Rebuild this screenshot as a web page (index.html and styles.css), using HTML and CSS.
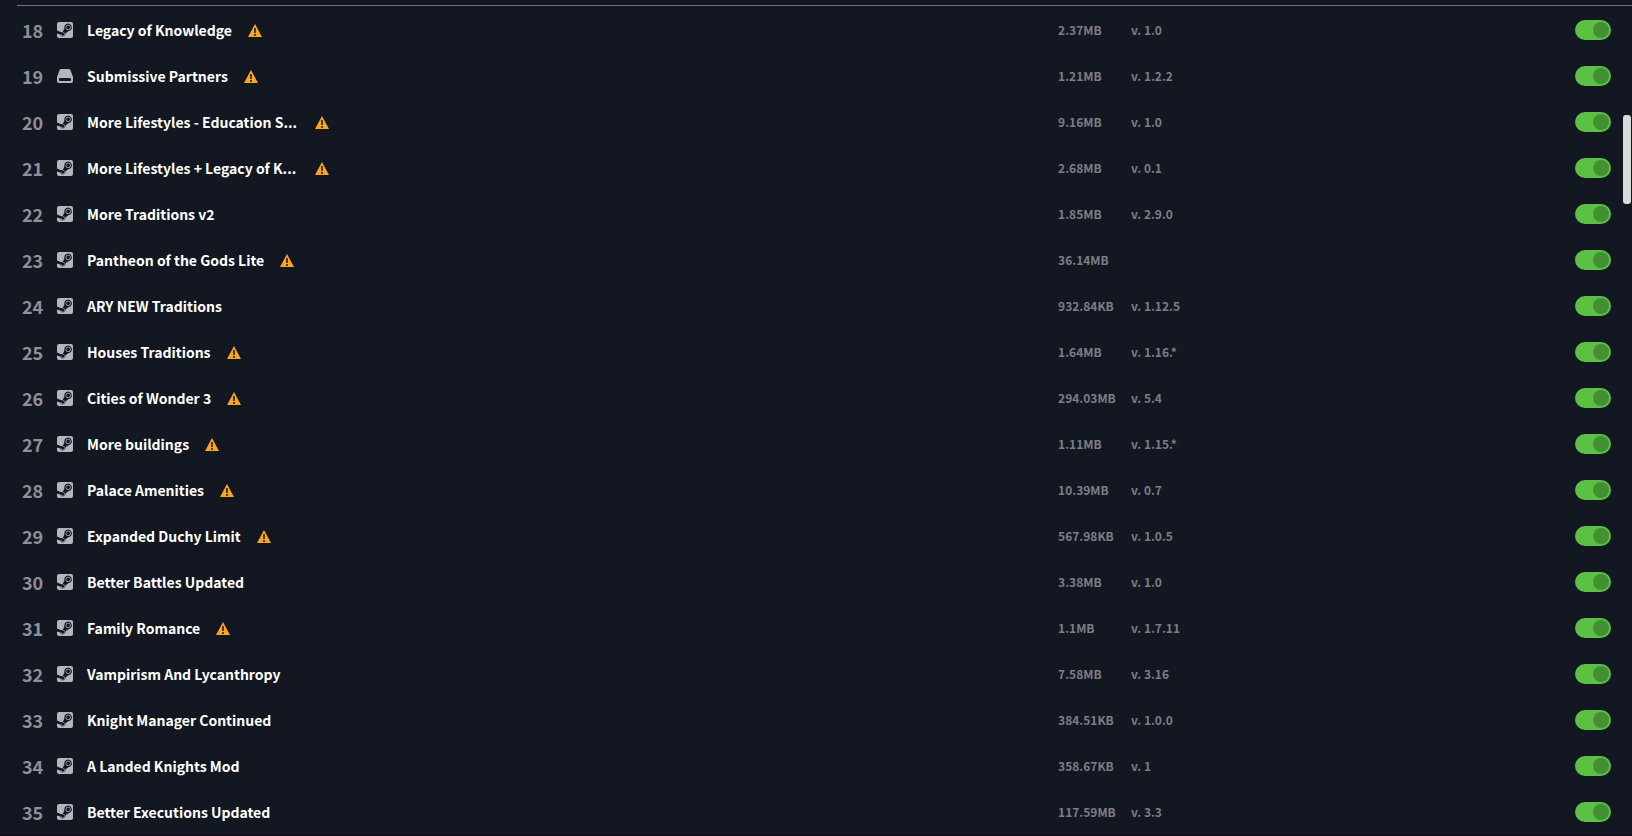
FILE: index.html
```html
<!DOCTYPE html>
<html lang="en">
<head>
<meta charset="utf-8">
<meta name="viewport" content="width=device-width, initial-scale=1">
<title>Mods</title>
<link rel="stylesheet" href="styles.css">
</head>
<body>
<svg class="sprite" aria-hidden="true">
  <symbol id="steam" viewBox="0 0 16 16">
    <rect width="16" height="16" rx="2" fill="#b4b6bd"/>
    <path d="M0 8.6 L4.2 10.3 Q5 9.7 5.9 9.8 L7.4 6.4 A3.8 3.8 0 1 1 11.3 9.2 L8.6 11.3 A2.8 2.8 0 0 1 3.2 12.6 L0 11.4 Z" fill="#131722"/>
    <circle cx="11.2" cy="5.4" r="2.3" fill="none" stroke="#b4b6bd" stroke-width="0.8"/>
    <path d="M4.2 12.1 A1.8 1.8 0 1 0 5.6 10.4" fill="none" stroke="#b4b6bd" stroke-width="0.6"/>
  </symbol>
  <symbol id="disk" viewBox="0 0 16 16">
    <path d="M4 1 H12 Q13 1 13.4 2 L16 9 V13 Q16 15 14 15 H2 Q0 15 0 13 V9 L2.6 2 Q3 1 4 1 Z" fill="#b4b6bd"/>
    <rect x="2" y="10" width="12" height="3" rx="1" fill="#131722"/>
  </symbol>
  <symbol id="warning" viewBox="0 0 14 13">
    <path d="M7 0 L14 13 H0 Z" fill="#f9a51f"/>
    <path d="M6 4 H8 V9 H6 Z M6 10 H8 V12 H6 Z" fill="#4a3a20"/>
  </symbol>
</svg>

<main class="mods">
<ul class="mod-list">
  <li class="mod"><span class="num">18</span><svg class="source"><use href="#steam"/></svg><div class="title"><label class="name" for="mod18">Legacy of Knowledge</label><svg class="warn"><use href="#warning"/></svg></div><span class="info">2.37MB</span><span class="info">v. 1.0</span><input type="checkbox" class="toggle" id="mod18" checked></li>
  <li class="mod"><span class="num">19</span><svg class="source"><use href="#disk"/></svg><div class="title"><label class="name" for="mod19">Submissive Partners</label><svg class="warn"><use href="#warning"/></svg></div><span class="info">1.21MB</span><span class="info">v. 1.2.2</span><input type="checkbox" class="toggle" id="mod19" checked></li>
  <li class="mod"><span class="num">20</span><svg class="source"><use href="#steam"/></svg><div class="title"><label class="name name-long" for="mod20">More Lifestyles - Education S...</label><svg class="warn"><use href="#warning"/></svg></div><span class="info">9.16MB</span><span class="info">v. 1.0</span><input type="checkbox" class="toggle" id="mod20" checked></li>
  <li class="mod"><span class="num">21</span><svg class="source"><use href="#steam"/></svg><div class="title"><label class="name name-long" for="mod21">More Lifestyles + Legacy of K...</label><svg class="warn"><use href="#warning"/></svg></div><span class="info">2.68MB</span><span class="info">v. 0.1</span><input type="checkbox" class="toggle" id="mod21" checked></li>
  <li class="mod"><span class="num">22</span><svg class="source"><use href="#steam"/></svg><div class="title"><label class="name" for="mod22">More Traditions v2</label></div><span class="info">1.85MB</span><span class="info">v. 2.9.0</span><input type="checkbox" class="toggle" id="mod22" checked></li>
  <li class="mod"><span class="num">23</span><svg class="source"><use href="#steam"/></svg><div class="title"><label class="name" for="mod23">Pantheon of the Gods Lite</label><svg class="warn"><use href="#warning"/></svg></div><span class="info">36.14MB</span><span class="info"></span><input type="checkbox" class="toggle" id="mod23" checked></li>
  <li class="mod"><span class="num">24</span><svg class="source"><use href="#steam"/></svg><div class="title"><label class="name" for="mod24">ARY NEW Traditions</label></div><span class="info">932.84KB</span><span class="info">v. 1.12.5</span><input type="checkbox" class="toggle" id="mod24" checked></li>
  <li class="mod"><span class="num">25</span><svg class="source"><use href="#steam"/></svg><div class="title"><label class="name" for="mod25">Houses Traditions</label><svg class="warn"><use href="#warning"/></svg></div><span class="info">1.64MB</span><span class="info">v. 1.16.*</span><input type="checkbox" class="toggle" id="mod25" checked></li>
  <li class="mod"><span class="num">26</span><svg class="source"><use href="#steam"/></svg><div class="title"><label class="name" for="mod26">Cities of Wonder 3</label><svg class="warn"><use href="#warning"/></svg></div><span class="info">294.03MB</span><span class="info">v. 5.4</span><input type="checkbox" class="toggle" id="mod26" checked></li>
  <li class="mod"><span class="num">27</span><svg class="source"><use href="#steam"/></svg><div class="title"><label class="name" for="mod27">More buildings</label><svg class="warn"><use href="#warning"/></svg></div><span class="info">1.11MB</span><span class="info">v. 1.15.*</span><input type="checkbox" class="toggle" id="mod27" checked></li>
  <li class="mod"><span class="num">28</span><svg class="source"><use href="#steam"/></svg><div class="title"><label class="name" for="mod28">Palace Amenities</label><svg class="warn"><use href="#warning"/></svg></div><span class="info">10.39MB</span><span class="info">v. 0.7</span><input type="checkbox" class="toggle" id="mod28" checked></li>
  <li class="mod"><span class="num">29</span><svg class="source"><use href="#steam"/></svg><div class="title"><label class="name" for="mod29">Expanded Duchy Limit</label><svg class="warn"><use href="#warning"/></svg></div><span class="info">567.98KB</span><span class="info">v. 1.0.5</span><input type="checkbox" class="toggle" id="mod29" checked></li>
  <li class="mod"><span class="num">30</span><svg class="source"><use href="#steam"/></svg><div class="title"><label class="name" for="mod30">Better Battles Updated</label></div><span class="info">3.38MB</span><span class="info">v. 1.0</span><input type="checkbox" class="toggle" id="mod30" checked></li>
  <li class="mod"><span class="num">31</span><svg class="source"><use href="#steam"/></svg><div class="title"><label class="name" for="mod31">Family Romance</label><svg class="warn"><use href="#warning"/></svg></div><span class="info">1.1MB</span><span class="info">v. 1.7.11</span><input type="checkbox" class="toggle" id="mod31" checked></li>
  <li class="mod"><span class="num">32</span><svg class="source"><use href="#steam"/></svg><div class="title"><label class="name" for="mod32">Vampirism And Lycanthropy</label></div><span class="info">7.58MB</span><span class="info">v. 3.16</span><input type="checkbox" class="toggle" id="mod32" checked></li>
  <li class="mod"><span class="num">33</span><svg class="source"><use href="#steam"/></svg><div class="title"><label class="name" for="mod33">Knight Manager Continued</label></div><span class="info">384.51KB</span><span class="info">v. 1.0.0</span><input type="checkbox" class="toggle" id="mod33" checked></li>
  <li class="mod"><span class="num">34</span><svg class="source"><use href="#steam"/></svg><div class="title"><label class="name" for="mod34">A Landed Knights Mod</label></div><span class="info">358.67KB</span><span class="info">v. 1</span><input type="checkbox" class="toggle" id="mod34" checked></li>
  <li class="mod"><span class="num">35</span><svg class="source"><use href="#steam"/></svg><div class="title"><label class="name" for="mod35">Better Executions Updated</label></div><span class="info">117.59MB</span><span class="info">v. 3.3</span><input type="checkbox" class="toggle" id="mod35" checked></li>
</ul>
</main>
<div class="scroll-thumb"></div>
</body>
</html>
```

FILE: styles.css
```css
* {box-sizing: border-box}

body {
  margin: 0;
  background: #131722;
  color: #fff;
  font-family: "Noto Sans CJK SC", "Noto Sans", sans-serif;
}

.sprite {
  display: none;
}

.mods {
  padding: 5px 0 0 17px;
  border-bottom: 1px solid #120c18;
}

.mod-list {
  list-style: none;
  margin: 0;
  padding: 1px 21px 0 5px;
  border-top: 1px solid #70747d;
}

.mod {
  display: grid;
  grid-template-columns: 35px 30px 35fr 73px 16fr 36px;
  align-items: center;
  height: 46px;
}

.num {
  font-size: 18px;
  line-height: 24px;
  font-weight: 700;
  color: #8d9098;
}

.source {
  width: 16px;
  height: 16px;
}

.title {
  display: flex;
  align-items: center;
  gap: 16px;
}

.name {
  font-size: 14px;
  line-height: 20px;
  font-weight: 700;
  white-space: nowrap;
}

.name-long {
  width: 212px;
}

.warn {
  width: 14px;
  height: 13px;
}

.info {
  font-size: 12px;
  line-height: 16px;
  font-weight: 700;
  color: #7b7e86;
}

.toggle {
  appearance: none;
  position: relative;
  width: 36px;
  height: 20px;
  margin: 0;
  border-radius: 10px;
  background: #5a5d66;
  cursor: pointer;
}

.toggle:checked {
  background: #5bc043;
}

.toggle::before {
  content: "";
  position: absolute;
  top: 2px;
  left: 2px;
  width: 16px;
  height: 16px;
  border-radius: 50%;
  background: #3c3f48;
}

.toggle:checked::before {
  left: 18px;
  background: #438f31;
}

/* scroll handle, over the right edge of the list */
.scroll-thumb {
  position: absolute;
  top: 115px;
  right: 1px;
  width: 8px;
  height: 89px;
  border-radius: 3px;
  background: #d9d9d9;
}
```
